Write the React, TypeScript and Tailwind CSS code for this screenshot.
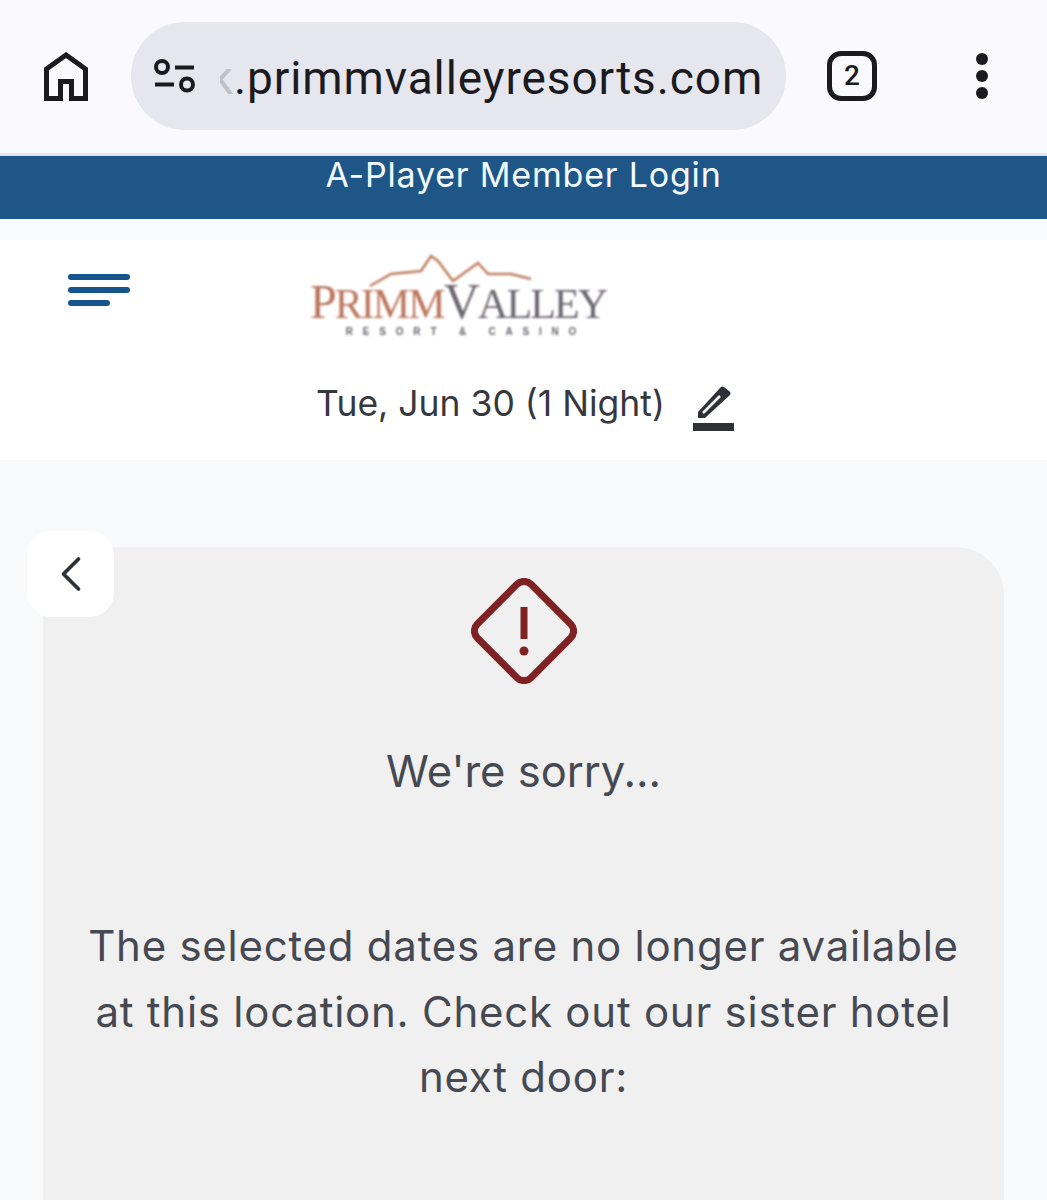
import React from "react";
import { ChevronLeft } from "lucide-react";

function HomeIcon() {
  return (
    <svg width="44" height="49" viewBox="0 0 44 49" fill="none" stroke="#1b1b1f" strokeWidth="5">
      <path d="M2.500 46.500V17L22 3l19.500 14v29.500h-14v-17h-11v17z" />
    </svg>
  );
}

function SiteSettingsIcon() {
  return (
    <svg width="42" height="34" viewBox="0 0 42 34" fill="none" stroke="#1b1b1f" strokeWidth="4">
      <circle cx="8" cy="8" r="6" />
      <path d="M21 8.500h19" />
      <path d="M1 25.500h19" />
      <circle cx="33" cy="25.500" r="6" />
    </svg>
  );
}

function EditIcon() {
  return (
    <svg width="42" height="47" viewBox="0 0 42 47">
      <path d="M5 34V28L27 4a3 3 0 0 1 4-1l5 4a3 3 0 0 1 1 4L12 34z" fill="#2f3136" />
      <path d="M10 29L27 12" stroke="#ffffff" strokeWidth="2.500" />
      <rect x="0" y="39" width="41" height="8" fill="#2f3136" />
    </svg>
  );
}

function WarningDiamond() {
  return (
    <svg width="106" height="106" viewBox="0 0 106 106" fill="none" stroke="#7f2224" strokeWidth="7">
      <rect x="15" y="15" width="76" height="76" rx="10" transform="rotate(45 53 53)" />
      <path d="M53 29v32" />
      <circle cx="53" cy="73" r="4.500" fill="#7f2224" stroke="none" />
    </svg>
  );
}

function PrimmLogo() {
  return (
    <div className="flex h-[90px] w-[300px] flex-col items-center opacity-90 blur-[1px]">
      <svg width="170" height="36" viewBox="0 0 170 36" fill="none" className="-mb-[6px] ml-[-11px]">
        <path
          d="M2 33L23 21L53 18L63 3L70 8L85 28L110 10L120 21L143 21L163 26"
          stroke="#b9714f"
          strokeWidth="2.500"
        />
      </svg>
      <div className="font-['Liberation_Serif',serif] leading-[36px] tracking-[-1.900px] whitespace-nowrap text-[#5c5560]">
        <span className="text-[48px] text-[#b5664a]">P</span>
        <span className="text-[42px] text-[#b5664a]">RIMM</span>
        <span className="text-[50px]">V</span>
        <span className="text-[42px]">ALLEY</span>
      </div>
      <div className="mt-[-4px] ml-[16px] font-['Liberation_Sans',sans-serif] text-[10px] leading-[10px] font-bold tracking-[9.800px] whitespace-nowrap text-[#55505a]">
        RESORT & CASINO
      </div>
    </div>
  );
}

export default function App() {
  return (
    <div className="h-[1200px] w-[1047px] overflow-hidden bg-[#f9fafc] font-['Inter',sans-serif]">
      {/* browser chrome */}
      <div className="flex h-[153px] items-center bg-[#f9f9fe] pb-[1px]">
        <div className="flex w-[132px] justify-center">
          <HomeIcon />
        </div>
        <div className="ml-[-1px] flex h-[108px] w-[655px] items-center overflow-hidden rounded-[54px] bg-[#e6e6ee] pl-[23px]">
          <SiteSettingsIcon />
          <div className="ml-[24px] flex items-baseline pt-[3px] font-['Roboto',sans-serif] text-[46px] leading-none tracking-[0.9px] whitespace-nowrap text-[#1b1b1f]">
            <span className="inline-flex w-[14px] justify-end overflow-hidden text-[#c0c0c8]">k</span>
            <span>.primmvalleyresorts.com</span>
          </div>
        </div>
        <div className="flex flex-1 items-center">
          <div className="ml-[41px] flex h-[50px] w-[50px] items-center justify-center rounded-[14px] border-[5px] border-[#1b1b1f] font-['Roboto',sans-serif] text-[28px] font-medium text-[#1b1b1f]">
            2
          </div>
          <div className="ml-[99px] flex flex-col gap-[5px]">
            <div className="h-[12px] w-[12px] rounded-full bg-[#1b1b1f]" />
            <div className="h-[12px] w-[12px] rounded-full bg-[#1b1b1f]" />
            <div className="h-[12px] w-[12px] rounded-full bg-[#1b1b1f]" />
          </div>
        </div>
      </div>
      <div className="h-[3px] bg-[#dfe6f2]" />

      {/* member bar */}
      <div className="h-[63px] bg-[#1f5688] text-center text-[34px] leading-[38px] tracking-[0.8px] text-[#f2fbff]">
        A-Player Member Login
      </div>
      <div className="h-[21px] bg-[#f9fbfd]" />

      {/* site header */}
      <div className="h-[220px] bg-white">
        <div className="relative flex h-[120px] justify-center">
          <div className="absolute top-[34px] left-[68px] flex flex-col gap-[7px]">
            <div className="h-[6px] w-[62px] rounded-full bg-[#15548d]" />
            <div className="h-[6px] w-[62px] rounded-full bg-[#15548d]" />
            <div className="h-[6px] w-[42px] rounded-full bg-[#15548d]" />
          </div>
          <div className="mt-[13px] ml-[-131px]">
            <PrimmLogo />
          </div>
        </div>
        <div className="flex items-start justify-center pt-[22px] pl-[4px]">
          <span className="text-[35.500px] leading-[44px] text-[#36383d]">Tue, Jun 30 (1 Night)</span>
          <div className="mt-[2px] ml-[28px]">
            <EditIcon />
          </div>
        </div>
      </div>

      {/* sorry card */}
      <div className="px-[43px] pt-[87px]">
        <div className="relative h-[700px] rounded-t-[48px] bg-[#f0f0f0] pt-[31px] text-center text-[#464952]">
          <div className="absolute top-[-16px] left-[-16px] flex h-[86px] w-[87px] items-center justify-center rounded-[24px] bg-white text-[#2f3136]">
            <ChevronLeft size={60} strokeWidth={1.500} />
          </div>
          <div className="flex justify-center">
            <WarningDiamond />
          </div>
          <div className="mt-[57px] text-[43.500px] leading-[60px]">We're sorry...</div>
          <div className="mt-[112px] px-[30px] text-[42px] leading-[65.500px] tracking-[0.750px]">
            The selected dates are no longer available at this location. Check out our sister hotel next door:
          </div>
        </div>
      </div>
    </div>
  );
}
